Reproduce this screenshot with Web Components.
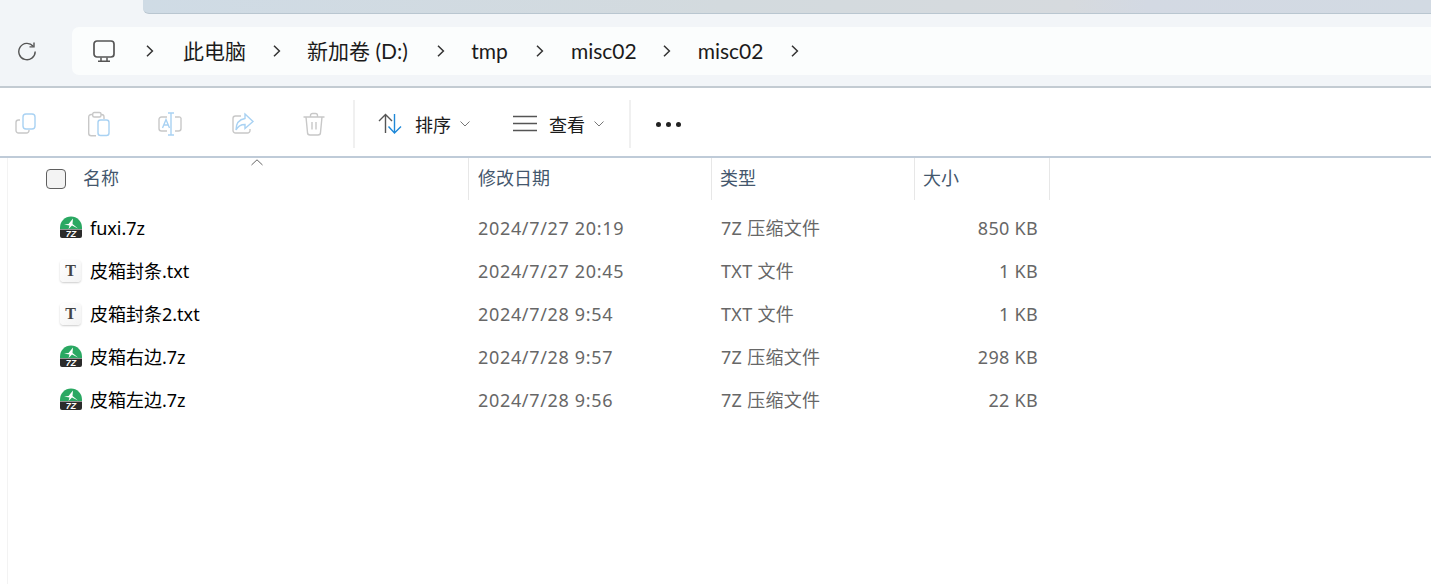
<!DOCTYPE html>
<html lang="zh">
<head>
<meta charset="utf-8">
<title>misc02</title>
<style>
html, body { margin: 0; height: 100%; background: #fff; overflow: hidden; }
body { font-family: "Noto Sans", "Noto Sans CJK SC", sans-serif; }
</style>
</head>
<body>
<explorer-window>
  <title-strip></title-strip>
  <nav-bar>
    <crumb-item>此电脑</crumb-item>
    <crumb-item style="--crumb-gap:29px">新加卷 (D:)</crumb-item>
    <crumb-item style="--crumb-gap:28.5px">tmp</crumb-item>
    <crumb-item>misc02</crumb-item>
    <crumb-item style="--crumb-gap:28px">misc02</crumb-item>
  </nav-bar>
  <tool-bar></tool-bar>
  <file-list>
    <file-row kind="7z" name="fuxi.7z" date="2024/7/27 20:19" type="7Z 压缩文件" size="850 KB"></file-row>
    <file-row kind="txt" name="皮箱封条.txt" date="2024/7/27 20:45" type="TXT 文件" size="1 KB"></file-row>
    <file-row kind="txt" name="皮箱封条2.txt" date="2024/7/28 9:54" type="TXT 文件" size="1 KB"></file-row>
    <file-row kind="7z" name="皮箱右边.7z" date="2024/7/28 9:57" type="7Z 压缩文件" size="298 KB"></file-row>
    <file-row kind="7z" name="皮箱左边.7z" date="2024/7/28 9:56" type="7Z 压缩文件" size="22 KB"></file-row>
  </file-list>
</explorer-window>

<script>
const FONT = `"Noto Sans", "Noto Sans CJK SC", sans-serif`;

class ExplorerWindow extends HTMLElement {
    constructor() {
        super();
        this.attachShadow({mode: "open"}).innerHTML = `
        <style>
        :host { display: flex; flex-direction: column; width: 1431px; height: 584px; overflow: hidden; background: #fff; font-family: ${FONT}; }
        </style>
        <slot></slot>`;
    }
}

class TitleStrip extends HTMLElement {
    constructor() {
        super();
        this.attachShadow({mode: "open"}).innerHTML = `
        <style>
        :host { display: block; height: 14px; padding-left: 143px; background: #f2f5f8; }
        .tab {
            height: 13px;
            border-bottom: 1px solid #b9c6d0;
            border-bottom-left-radius: 6px;
            background: linear-gradient(90deg, #cfdbe5 0%, #d3dade 45%, #d6dade 72%, #d3d9e3 78%, #d2dae3 100%);
        }
        </style>
        <div class="tab"></div>`;
    }
}

class NavBar extends HTMLElement {
    constructor() {
        super();
        this.attachShadow({mode: "open"}).innerHTML = `
        <style>
        :host { display: flex; align-items: center; height: 70px; padding-top: 2px; border-bottom: 2px solid #c3cbd2; background: #f2f5f8; }
        .refresh { width: 72px; display: flex; justify-content: center; flex: none; padding-right: 18px; box-sizing: border-box; }
        .address {
            flex: 1;
            height: 48px;
            display: flex;
            align-items: center;
            gap: 26.5px;
            padding-left: 21px;
            background: #fbfdfd;
            border-radius: 7px 0 0 7px;
        }
        svg { display: block; }
        </style>
        <div class="refresh">
          <svg width="20" height="20" viewBox="0 0 20 20" fill="none" stroke="#555" stroke-width="1.4">
            <path d="M16.2 5.2A8.2 8.2 0 1 0 18.2 10.6"/>
            <path d="M17 1.4V5.9H12.5"/>
          </svg>
        </div>
        <div class="address">
          <svg style="margin-right:4px" width="22" height="23" viewBox="0 0 22 23" fill="none" stroke="#555" stroke-width="1.7">
            <rect x="1" y="1" width="20" height="16" rx="3"/>
            <path d="M8 17.5V21M14 17.5V21M5 21.2H17" stroke-width="1.5"/>
          </svg>
          <crumb-chevron style="margin-right:3px"></crumb-chevron>
          <slot></slot>
        </div>`;
    }
}

class CrumbChevron extends HTMLElement {
    constructor() {
        super();
        this.attachShadow({mode: "open"}).innerHTML = `
        <style>
        :host { display: block; flex: none; width: 8px; }
        svg { display: block; }
        </style>
        <svg width="8" height="12" viewBox="0 0 8 12" fill="none" stroke="#333" stroke-width="1.5"><path d="M1 .8 6.4 6 1 11.2"/></svg>`;
    }
}

class CrumbItem extends HTMLElement {
    constructor() {
        super();
        this.attachShadow({mode: "open"}).innerHTML = `
        <style>
        :host { display: flex; align-items: center; gap: var(--crumb-gap, 26.5px); flex: none; font-family: Lato, "Noto Sans CJK SC", sans-serif; font-size: 21px; color: #1b1b1b; line-height: 28px; }
        </style>
        <span><slot></slot></span>
        <crumb-chevron></crumb-chevron>`;
    }
}

class ToolIcon extends HTMLElement {
    connectedCallback() {
        const G = "#c8c8c8", B = "#a9d2f3";
        const icons = {
            copy: `<g transform="translate(-1 0)"><path d="M6 8H4.5A2.5 2.5 0 0 0 2 10.5V18.5A2.5 2.5 0 0 0 4.5 21H12.5A2.5 2.5 0 0 0 15 18.5V18" stroke="${G}"/><rect x="9" y="2" width="12" height="15" rx="3" stroke="${B}"/></g>`,
            paste: `<path d="M5.7 2.5H4.2A2.5 2.5 0 0 0 1.700 5V21.200A2.500 2.500 0 0 0 4.200 23.700H9M17 7V5A2.500 2.500 0 0 0 14.500 2.500H14" stroke="${G}"/><rect x="5.700" y=".5" width="8.300" height="4.500" rx="1.500" stroke="${G}"/><rect x="11" y="8" width="11" height="15.500" rx="2.500" stroke="${B}"/>`,
            rename: `<g transform="translate(-2 0)"><path d="M10 5H4.500A2.500 2.500 0 0 0 2 7.500V16.500A2.500 2.500 0 0 0 4.500 19H10M18 5H21.500A2 2 0 0 1 24 7.500V16.500A2.500 2.500 0 0 1 21.500 19H18" stroke="${G}"/><path d="M11 1H17M14 1V23M11 23H17" stroke="${B}"/><path d="M5.500 16 9 7.500 12.500 16M6.800 13H11.200" stroke="${B}"/></g>`,
            share: `<path d="M11 4H5.500A2.500 2.500 0 0 0 3 6.500V18.500A2.500 2.500 0 0 0 5.500 21H17.500A2.500 2.500 0 0 0 20 18.500V17" stroke="${G}"/><path d="M15 2 23 9.500 15 16.500V12.500C11 12.500 8 14 6 18 6 12 9 7.500 15 6.500Z" stroke="${B}"/>`,
            trash: `<path d="M1.500 5H22.500M8.500 5V3.500A2 2 0 0 1 10.500 1.500H13.500A2 2 0 0 1 15.500 3.500V5M4 5 5.500 20.500A2.500 2.500 0 0 0 8 23H16A2.500 2.500 0 0 0 18.500 20.500L20 5M10 10V17.500M14 10V17.500" stroke="${G}"/>`,
            sort: `<g transform="translate(-1 0)"><path d="M7.500 21V2.500M1 9 7.500 2.500 14 9" stroke="#555"/><path d="M16.500 2V21M10.500 14.500 16.500 21 23 14.500" stroke="#1e88d8"/></g>`,
            view: `<path d="M0 4.500H24M0 11.500H24M0 18.500H24" stroke="#555"/>`,
        };
        this.attachShadow({mode: "open"}).innerHTML = `
        <style>
        :host { display: block; flex: none; width: 24px; height: 24px; }
        svg { display: block; overflow: visible; }
        </style>
        <svg width="24" height="24" viewBox="0 0 24 24" fill="none" stroke-width="1.4">${icons[this.getAttribute("name")]}</svg>`;
    }
}

class ToolBar extends HTMLElement {
    constructor() {
        super();
        this.attachShadow({mode: "open"}).innerHTML = `
        <style>
        :host { display: flex; align-items: center; height: 64px; padding-top: 4px; background: #fff; padding-left: 15px; color: #1b1b1b; font-size: 18px; }
        .group { display: flex; align-items: center; }
        .plain { gap: 47.750px; }
        .sep { width: 2px; height: 48px; background: #f0f0f0; flex: none; }
        .sort { display: flex; align-items: center; gap: 12px; }
        .sort svg { margin-left: -3px; }
        .dots { display: flex; gap: 5px; margin-left: 25px; }
        .dots i { width: 5px; height: 5px; border-radius: 50%; background: #222; }
        </style>
        <div class="group plain">
          <tool-icon name="copy"></tool-icon>
          <tool-icon name="paste"></tool-icon>
          <tool-icon name="rename"></tool-icon>
          <tool-icon name="share"></tool-icon>
          <tool-icon name="trash"></tool-icon>
        </div>
        <div class="sep" style="margin-left:27px"></div>
        <div class="sort" style="margin-left:24px"><tool-icon name="sort"></tool-icon><span>排序</span>
          <svg width="10" height="6" viewBox="0 0 10 6" fill="none" stroke="#777"><path d="M.5.500 5 5 9.500.500"/></svg></div>
        <div class="sort" style="margin-left:43px"><tool-icon name="view"></tool-icon><span>查看</span>
          <svg width="10" height="6" viewBox="0 0 10 6" fill="none" stroke="#777"><path d="M.5.500 5 5 9.500.500"/></svg></div>
        <div class="sep" style="margin-left:25px"></div>
        <div class="dots"><i></i><i></i><i></i></div>`;
    }
}

class FileList extends HTMLElement {
    constructor() {
        super();
        this.attachShadow({mode: "open"}).innerHTML = `
        <style>
        :host { display: block; flex: 1; position: relative; border-top: 2px solid #bfcbd8; }
        .body { margin-left: 7px; height: 100%; border-left: 1px solid #f3f3f3; }
        .head { display: grid; grid-template-columns: 461px 243px 203px 135px; height: 42px; margin-bottom: 6px; color: #44576d; font-size: 18px; }
        .head div { box-sizing: border-box; padding-bottom: 5px; border-right: 1px solid #e7e7e7; display: flex; align-items: center; padding-left: 9px; }
        .head div:first-child { padding-left: 38px; gap: 17px; }
        .head div:nth-child(3), .head div:nth-child(4) { padding-left: 8px; }
        .check { box-sizing: border-box; width: 20px; height: 20px; border: 1px solid #5f5f5f; border-radius: 4px; background: #f3f3f3; margin-top: 5px; }
        .caret { position: absolute; left: 251px; top: 1px; display: block; }
        </style>
        <div class="body">
          <div class="head">
            <div><span class="check"></span><span>名称</span></div>
            <div>修改日期</div>
            <div>类型</div>
            <div>大小</div>
          </div>
          <slot></slot>
        </div>
        <svg class="caret" width="12" height="7" viewBox="0 0 12 7" fill="none" stroke="#666"><path d="M.5 6 6 .8 11.500 6"/></svg>`;
    }
}

class FileRow extends HTMLElement {
    connectedCallback() {
        const icon = this.getAttribute("kind") === "7z"
            ? `<svg width="24" height="23" viewBox="0 0 24 23">
                 <path d="M1 13V11.500a11 11 0 0 1 22 0V13Z" fill="#2aa862"/>
                 <path d="M14 2.500 9.500 8 5 8.500 10.500 9.500 9.500 13 13 9.500 19 12.500 13.500 8Z" fill="#fff"/>
                 <path d="M1 13.500H23V20A2 2 0 0 1 21 22H3A2 2 0 0 1 1 20Z" fill="#2b2b2b"/>
                 <text x="12" y="21" text-anchor="middle" font-size="9" font-weight="700" font-style="italic" font-family="Liberation Sans, sans-serif" fill="#fff">7Z</text>
               </svg>`
            : `<span class="txt">T</span>`;
        this.attachShadow({mode: "open"}).innerHTML = `
        <style>
        :host { display: grid; grid-template-columns: 461px 243px 203px 123px; height: 43px; align-items: center; font-size: 18px; line-height: 24px; color: #676767; }
        .name { display: flex; align-items: center; gap: 7px; padding-left: 51px; color: #000; }
        .date { padding-left: 9px; letter-spacing: .67px; }
        .type { padding-left: 9px; letter-spacing: .3px; }
        .size { text-align: right; letter-spacing: .3px; }
        svg { display: block; flex: none; }
        .txt {
            flex: none; width: 21px; height: 22px; margin-left: 1px; margin-right: 2px;
            background: linear-gradient(135deg, #fff, #f3f3f3); border-radius: 4px; box-shadow: 0 1px 2px #ccc;
            font: 700 16px/21px "Liberation Serif", serif; color: #444; text-align: center;
        }
        </style>
        <div class="name">${icon}<span>${this.getAttribute("name")}</span></div>
        <div class="date">${this.getAttribute("date")}</div>
        <div class="type">${this.getAttribute("type")}</div>
        <div class="size">${this.getAttribute("size")}</div>`;
    }
}

customElements.define("crumb-chevron", CrumbChevron);
customElements.define("crumb-item", CrumbItem);
customElements.define("tool-icon", ToolIcon);
customElements.define("explorer-window", ExplorerWindow);
customElements.define("title-strip", TitleStrip);
customElements.define("nav-bar", NavBar);
customElements.define("tool-bar", ToolBar);
customElements.define("file-list", FileList);
customElements.define("file-row", FileRow);
</script>
</body>
</html>
